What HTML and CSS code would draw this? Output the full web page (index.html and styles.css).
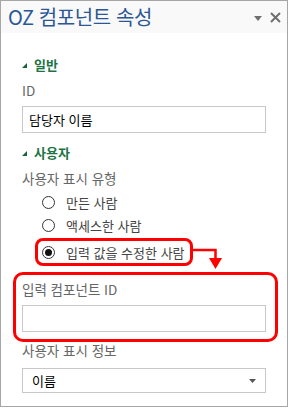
FILE: index.html
```html
<!DOCTYPE html>
<html lang="ko">
<head>
<meta charset="utf-8">
<link rel="stylesheet" href="styles.css">
</head>
<body>
<div class="panel">
  <div class="header">
    <div class="title">OZ 컴포넌트 속성</div>
    <svg class="menu-arrow" width="8" height="5" viewBox="0 0 8 5"><polygon points="0,0 8,0 4,5" fill="#6f6f6f"/></svg>
    <svg class="close" width="11" height="11" viewBox="0 0 11 11"><path d="M1 1 L10 10 M10 1 L1 10" stroke="#6f6f6f" stroke-width="2"/></svg>
  </div>
  <div class="body">
    <div class="section">
      <svg class="tri" width="5" height="5" viewBox="0 0 5 5"><polygon points="5,0 5,5 0,5" fill="#1f5f3b"/></svg>
      <span>일반</span>
    </div>
    <div class="label">ID</div>
    <div class="input">담당자 이름</div>

    <div class="section s2">
      <svg class="tri" width="5" height="5" viewBox="0 0 5 5"><polygon points="5,0 5,5 0,5" fill="#1f5f3b"/></svg>
      <span>사용자</span>
    </div>
    <div class="label">사용자 표시 유형</div>
    <div class="radios">
      <div class="radio"><span class="circle"></span><span>만든 사람</span></div>
      <div class="radio"><span class="circle"></span><span>액세스한 사람</span></div>
      <div class="radio marked"><span class="circle checked"></span><span>입력 값을 수정한 사람</span></div>
    </div>

    <div class="highlight">
      <div class="label">입력 컴포넌트 ID</div>
      <div class="input empty"></div>
    </div>

    <div class="label info">사용자 표시 정보</div>
    <div class="select">
      <span>이름</span>
      <svg width="7" height="4" viewBox="0 0 7 4"><polygon points="0,0 7,0 3.5,4" fill="#555"/></svg>
    </div>
  </div>
  <svg class="connector" width="32" height="25" viewBox="0 0 32 25">
    <path d="M1 4 H23.5 V13" fill="none" stroke="#ff0000" stroke-width="2.5"/>
    <polygon points="17,12 30,12 23.5,23" fill="#ff0000"/>
  </svg>
</div>
</body>
</html>
```
FILE: styles.css
```css
html, body {
  margin: 0;
  padding: 0;
  background: #ffffff;
}
body {
  width: 290px;
  height: 408px;
  font-family: "Noto Sans CJK KR", "Noto Sans", sans-serif;
}
.panel {
  position: relative;
  box-sizing: border-box;
  width: 288px;
  height: 407px;
  border: 1px solid #a6a6a6;
  background: #ffffff;
}
.header {
  height: 32px;
  display: flex;
  align-items: center;
  padding-left: 7px;
  background: #f9f9f9;
}
.title {
  font-size: 20px;
  line-height: 32px;
  color: #2b5797;
  letter-spacing: -0.4px;
  white-space: nowrap;
}
.menu-arrow {
  margin-left: auto;
  margin-top: 3px;
}
.close {
  margin-left: 8px;
  margin-right: 6px;
}
.body {
  padding: 0 21px;
}
.section {
  display: flex;
  align-items: center;
  height: 20px;
  margin-top: 21px;
  color: #217346;
  font-size: 13px;
  font-weight: bold;
}
.section.s2 {
  margin-top: 9px;
}
.tri {
  margin-right: 7px;
  margin-top: 2px;
}
.label {
  height: 20px;
  line-height: 20px;
  margin-top: 6px;
  font-size: 13.5px;
  color: #666666;
}
.input {
  box-sizing: border-box;
  height: 27px;
  margin-top: 6px;
  border: 1px solid #c8c8c8;
  padding-left: 6px;
  font-size: 13px;
  line-height: 25px;
  color: #000000;
}
.radios {
  margin-top: 3px;
}
.radio {
  display: flex;
  align-items: center;
  height: 23px;
  padding-left: 20px;
  font-size: 13px;
  color: #444444;
}
.circle {
  box-sizing: border-box;
  width: 13px;
  height: 13px;
  border: 1px solid #333333;
  border-radius: 50%;
  margin-right: 11px;
  display: flex;
  align-items: center;
  justify-content: center;
  background: #ffffff;
}
.circle.checked::after {
  content: "";
  width: 7px;
  height: 7px;
  border-radius: 50%;
  background: #111111;
}
.radio.marked {
  box-sizing: border-box;
  width: 158px;
  height: 28px;
  margin-top: 1px;
  margin-left: 13px;
  padding-left: 4px;
  border: 3px solid #ff0000;
  border-radius: 8px;
}
.highlight {
  margin: 6px -12px 0 -9px;
  padding: 4px 9px 7px 6px;
  border: 3px solid #ff0000;
  border-radius: 10px;
}
.highlight .label {
  margin-top: 0;
}
.label.info {
  height: 17px;
  line-height: 17px;
  margin-top: 0;
}
.select {
  box-sizing: border-box;
  height: 25px;
  margin-top: 9px;
  border: 1px solid #c8c8c8;
  padding: 0 9px;
  display: flex;
  align-items: center;
  justify-content: space-between;
  font-size: 13px;
  color: #000000;
}
.connector {
  position: absolute;
  left: 191px;
  top: 245px;
}
```
